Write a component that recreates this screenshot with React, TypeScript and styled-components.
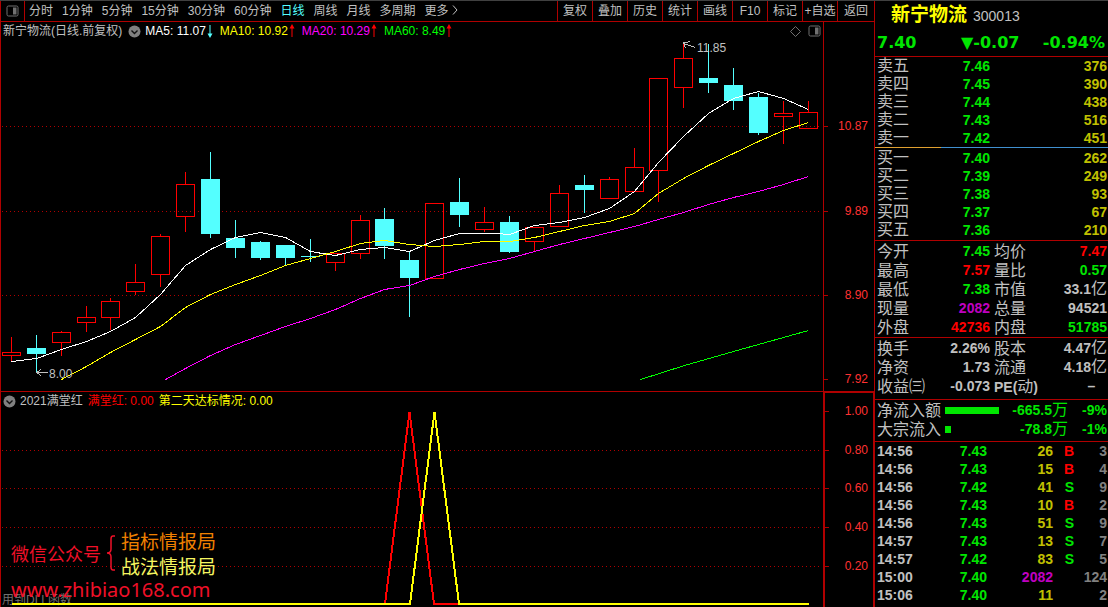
import React from "react";
import styled, { createGlobalStyle } from "styled-components";

const latin = '"Liberation Sans", "Noto Sans CJK SC", sans-serif';
const RED_LINE = "#b00000";

const colors = {
  text: "#c0c0c0",
  green: "#00e600",
  red: "#ff0000",
  yellow: "#c0c000",
  purple: "#c000c0",
  gray: "#808080",
  cyan: "#54ffff",
} as const;
type Tone = keyof typeof colors;

const GlobalStyle = createGlobalStyle`
  * { box-sizing: border-box; }
  body { margin: 0; background: #000; color: ${colors.text}; font-family: ${latin}; font-size: 12px; }
`;

const Page = styled.div`
  display: grid;
  grid-template-columns: minmax(0, 1fr) 234px;
  height: 100vh;
  min-height: 606px;
  border-top: 1px solid #404040;
  background: #000;
`;

const Workspace = styled.main`
  display: grid;
  grid-template-rows: 21px minmax(0, 370fr) minmax(0, 215fr);
  border-left: 1px solid ${RED_LINE};
  min-width: 0;
`;

/* ---------- toolbar ---------- */
const Toolbar = styled.nav`
  display: flex;
  justify-content: space-between;
  border-bottom: 1px solid ${RED_LINE};
  min-width: 0;
`;
const Periods = styled.div`
  display: flex;
  gap: 9px;
`;
const Actions = styled.div`
  display: flex;
`;
const BareButton = styled.button`
  border: 0;
  padding: 0;
  background: none;
  color: ${colors.text};
  font: 12px/20px ${latin};
  white-space: nowrap;
  cursor: pointer;
`;
const LayoutButton = styled(BareButton)`
  display: flex;
  align-items: center;
  width: 24px;
  padding-left: 5px;
  margin-right: -5px;
  border-right: 1px solid ${RED_LINE};
`;
const PeriodButton = styled(BareButton)<{ $active?: boolean }>`
  color: ${(p) => (p.$active ? colors.cyan : colors.text)};
`;
const ActionButton = styled(BareButton)`
  width: 35px;
  border-left: 1px solid ${RED_LINE};
  &:last-child { width: 37px; }
`;

/* ---------- charts ---------- */
const Pane = styled.section`
  display: grid;
  grid-template-columns: minmax(0, 1fr) 51px;
  grid-template-rows: minmax(0, 1fr);
  min-height: 0;
`;
const MainPane = styled(Pane)`
  border-bottom: 1px solid ${RED_LINE};
`;
const Plot = styled.div`
  position: relative;
  min-width: 0;
  overflow: hidden;
`;
const Drawing = styled.svg`
  display: block;
  position: relative;
  z-index: 1;
  width: 100%;
  height: 100%;
`;
const Legend = styled.header`
  position: absolute;
  z-index: 2;
  inset: 2px 2px auto 2px;
  display: flex;
  align-items: center;
  height: 14px;
  line-height: 14px;
  white-space: nowrap;
`;
const LegendTitle = styled.span`
  margin-right: 6px;
`;
const LegendItem = styled.span<{ $color: string }>`
  display: flex;
  align-items: center;
  gap: 1px;
  margin-right: 7px;
  color: ${(p) => p.$color};
`;
const FormulaItem = styled.span<{ $color: string }>`
  margin-left: 5px;
  color: ${(p) => p.$color};
`;
const ToggleButton = styled(BareButton)`
  display: flex;
  margin-right: 4px;
`;
const LegendTools = styled.span`
  display: flex;
  align-items: center;
  gap: 7px;
  margin-left: auto;
`;
const PriceNote = styled.span`
  position: absolute;
  z-index: 2;
  line-height: 14px;
`;
const Axis = styled.div<{ $rows: string; $boxed?: boolean }>`
  display: grid;
  grid-template-rows: ${(p) => p.$rows};
  border: 0 solid ${RED_LINE};
  border-width: ${(p) => (p.$boxed ? "1px 1px 0 2px" : "0 0 0 1px")};
  padding-right: ${(p) => (p.$boxed ? 5 : 6)}px;
  color: #ff3232;
`;
const AxisLabel = styled.span`
  position: relative;
  align-self: end;
  height: 14px;
  line-height: 14px;
  text-align: right;
  &::before {
    content: "";
    position: absolute;
    left: 0;
    top: 7px;
    width: 4px;
    height: 1px;
    background: ${RED_LINE};
  }
`;

/* ---------- watermark ---------- */
const Watermark = styled.div`
  position: absolute;
  z-index: 2;
  left: 10px;
  bottom: 5px;
`;
const WatermarkRow = styled.div`
  display: flex;
  align-items: center;
  gap: 5px;
  color: #f01028;
  font: 18px/24px "Noto Sans CJK SC", sans-serif;
`;
const WatermarkNames = styled.div`
  display: grid;
  font-size: 19px;
  line-height: 25px;
`;
const WatermarkName = styled.span<{ $color: string }>`
  color: ${(p) => p.$color};
`;
const Site = styled.div`
  color: #f01028;
  font: 20px/24px "Noto Sans", sans-serif;
`;
const DllNote = styled.span`
  position: absolute;
  z-index: 0;
  left: 1px;
  bottom: 0;
  color: #707070;
  line-height: 14px;
`;

/* ---------- quote panel ---------- */
const Sidebar = styled.aside`
  border-left: 1px solid ${RED_LINE};
  min-width: 0;
`;
const QuoteHead = styled.header`
  height: 55px;
  padding: 0 3px 0 2px;
`;
const NameLine = styled.div`
  display: flex;
  align-items: baseline;
  gap: 6px;
  padding-left: 14px;
  line-height: 24px;
`;
const StockName = styled.h1`
  margin: 0;
  color: #ffff00;
  font: bold 19px/24px "Noto Sans CJK SC", sans-serif;
`;
const StockCode = styled.span`
  font-size: 14px;
`;
const PriceLine = styled.div`
  display: grid;
  grid-template-columns: 84px 1fr auto;
  color: ${colors.green};
  font: bold 16px/30px "DejaVu Sans", sans-serif;
`;
const Block = styled.section<{ $top: number; $bottom: number }>`
  padding: ${(p) => p.$top}px 1px ${(p) => p.$bottom}px 2px;
  border-top: 1px solid ${RED_LINE};
`;
const SpreadBar = styled.div`
  height: 1px;
  margin: 0 -1px 1px -2px;
  background: linear-gradient(to right, #e0a030 66px, #4090d0 66px);
`;
const DataTable = styled.table`
  width: 100%;
  table-layout: fixed;
  border-collapse: collapse;
`;
const Row = styled.tr<{ $height: number }>`
  height: ${(p) => p.$height}px;
  line-height: ${(p) => p.$height}px;
`;
const Label = styled.th<{ $indent?: boolean }>`
  padding: 0 0 0 ${(p) => (p.$indent ? 4 : 0)}px;
  text-align: left;
  white-space: nowrap;
  font-size: 16px;
  font-weight: 400;
  line-height: inherit;
`;
const Value = styled.td<{ $tone?: Tone; $left?: boolean }>`
  padding: 0;
  color: ${(p) => colors[p.$tone ?? "text"]};
  text-align: ${(p) => (p.$left ? "left" : "right")};
  white-space: nowrap;
  font-size: 14px;
  font-weight: 700;
  line-height: inherit;
`;
const Unit = styled.span`
  font-size: 16px;
  font-weight: 400;
  line-height: 1;
`;
const Latin = styled.b`
  font-size: 14px;
  line-height: 1;
`;
const BarCell = styled.td`
  padding: 0;
`;
const Bar = styled.div`
  height: 7px;
  background: ${colors.green};
`;

/* ---------- data ---------- */
const periods = ["分时", "1分钟", "5分钟", "15分钟", "30分钟", "60分钟", "日线", "周线", "月线", "多周期"];
const actions = ["复权", "叠加", "历史", "统计", "画线", "F10", "标记", "+自选", "返回"];

const averages = [
  { text: "MA5: 11.07", color: "#ffffff", up: false },
  { text: "MA10: 10.92", color: "#ffff00", up: true },
  { text: "MA20: 10.29", color: "#ff00ff", up: true },
  { text: "MA60: 8.49", color: "#00ff00", up: true },
];

// centre x, high, body top, body bottom, low, rising
type Candle = [number, number, number, number, number, boolean];
const candles: Candle[] = [
  [11, 337, 352, 355, 361, true], [36, 335, 348, 354, 372, false],
  [61, 331, 332, 342, 356, true], [86, 306, 317, 322, 332, true],
  [110, 298, 301, 317, 330, true], [135, 264, 282, 291, 295, true],
  [160, 234, 236, 274, 287, true], [185, 172, 184, 216, 232, true],
  [210, 152, 179, 234, 238, false], [235, 220, 238, 248, 258, false],
  [260, 241, 242, 258, 260, false], [285, 245, 245, 258, 265, false],
  [310, 239, 256, 257, 262, false], [335, 253, 253, 262, 271, true],
  [360, 215, 220, 253, 259, true], [384, 208, 219, 246, 259, false],
  [409, 251, 260, 278, 317, false], [434, 203, 203, 278, 278, true],
  [459, 178, 202, 215, 227, false], [484, 207, 222, 229, 232, true],
  [509, 216, 222, 252, 253, false], [534, 227, 227, 241, 251, true],
  [559, 185, 193, 226, 226, true], [584, 175, 185, 190, 213, false],
  [609, 177, 179, 198, 198, true], [634, 148, 167, 191, 191, true],
  [658, 78, 78, 170, 202, true], [683, 43, 58, 87, 108, true],
  [708, 44, 78, 83, 93, false], [733, 68, 85, 101, 110, false],
  [758, 93, 97, 133, 135, false], [783, 101, 113, 116, 144, true],
  [808, 101, 112, 128, 128, true],
];

const maLines = [
  { color: "#ffffff", points: "11,361 36,358 61,349 86,341 110,331 135,317 160,294 185,265 210,249 235,237 260,232 285,237 310,251 322,253 335,255 360,249 384,247 409,251 434,240 459,233 496,233 509,234 534,225 559,222 584,217 609,208 634,191 658,162 683,136 708,113 733,98 758,91 783,98 808,109" },
  { color: "#ffff00", points: "61,379 86,366 110,352 135,339 160,326 185,307 210,294 235,284 260,275 285,265 310,258 335,251 360,243 384,240 409,244 434,246 459,244 484,241 509,241 534,237 559,231 584,225 609,221 634,213 658,193 683,178 708,165 733,153 758,141 783,130 808,122" },
  { color: "#ff00ff", points: "165,379 185,368 210,355 235,344 260,335 285,326 310,318 335,309 360,298 384,289 409,285 434,276 459,269 484,263 509,258 534,251 559,244 584,238 609,232 634,226 658,219 683,212 708,204 733,197 758,191 783,184 808,176" },
  { color: "#00ff00", points: "640,379 684,365 733,351 783,337 808,330" },
];

const sells = [["卖五", "7.46", 376], ["卖四", "7.45", 390], ["卖三", "7.44", 438], ["卖二", "7.43", 516], ["卖一", "7.42", 451]];
const buys = [["买一", "7.40", 262], ["买二", "7.39", 249], ["买三", "7.38", 93], ["买四", "7.37", 67], ["买五", "7.36", 210]];

type Info = [React.ReactNode, React.ReactNode, Tone, React.ReactNode, React.ReactNode, Tone];
const infoTop: Info[] = [
  ["今开", "7.45", "green", "均价", "7.47", "red"],
  ["最高", "7.57", "red", "量比", "0.57", "green"],
  ["最低", "7.38", "green", "市值", <>33.1<Unit>亿</Unit></>, "text"],
  ["现量", "2082", "purple", "总量", "94521", "text"],
  ["外盘", "42736", "red", "内盘", "51785", "green"],
];
const infoBottom: Info[] = [
  ["换手", "2.26%", "text", "股本", <>4.47<Unit>亿</Unit></>, "text"],
  ["净资", "1.73", "text", "流通", <>4.18<Unit>亿</Unit></>, "text"],
  ["收益㈢", "-0.073", "text", <><Latin>PE(</Latin>动<Latin>)</Latin></>, <>–&nbsp;&nbsp;&nbsp;</>, "text"],
];
const flows = [
  { label: "净流入额", bar: 54, value: "-665.5", percent: "-9%" },
  { label: "大宗流入", bar: 6, value: "-78.8", percent: "-1%" },
];
const deals: [string, string, number, string, number][] = [
  ["14:56", "7.43", 26, "B", 3],
  ["14:56", "7.43", 15, "B", 4],
  ["14:56", "7.42", 41, "S", 9],
  ["14:56", "7.43", 10, "B", 2],
  ["14:56", "7.43", 51, "S", 9],
  ["14:57", "7.43", 13, "S", 7],
  ["14:57", "7.42", 83, "S", 5],
  ["15:00", "7.40", 2082, "", 124],
  ["15:06", "7.40", 11, "", 2],
];

/* ---------- icons ---------- */
const PanelIcon = () => (
  <svg width="13" height="12" viewBox="0 0 13 12" aria-hidden="true">
    <rect x="1" y="1" width="11" height="10" rx="1.5" fill="none" stroke="#707070" />
    <rect x="7" y="2.5" width="3.5" height="7" fill="#707070" />
  </svg>
);
const DiamondIcon = () => (
  <svg width="11" height="11" viewBox="0 0 11 11" aria-hidden="true">
    <path d="M5.5 .5l5 5-5 5-5-5z" fill="none" stroke="#707070" />
  </svg>
);
const ChevronBadge = () => (
  <svg width="13" height="13" viewBox="0 0 13 13" aria-hidden="true">
    <circle cx="6.5" cy="6.5" r="6" fill="#808080" />
    <path d="M3.5 5.5l3 3 3-3" fill="none" stroke="#101010" strokeWidth="1.4" />
  </svg>
);
const Trend = ({ up }: { up: boolean }) => (
  <svg width="6" height="14" viewBox="0 0 6 14" aria-hidden="true">
    {up ? (
      <path d="M3 0L5.5 4.5H3.5V13H2.5V4.5H.5z" fill="#ff0000" />
    ) : (
      <path d="M3 14L5.5 9.5H3.5V1H2.5V9.5H.5z" fill={colors.cyan} />
    )}
  </svg>
);

const GridLine = ({ y }: { y: number }) => (
  <line x1="2" x2="821" y1={y + 0.5} y2={y + 0.5} stroke={RED_LINE} strokeDasharray="1 3" />
);

const CandleShape = ({ c: [x, high, top, bottom, low, up] }: { c: Candle }) =>
  up ? (
    <path
      d={`M${x - 8.5} ${top + 0.5}H${x + 9.5}V${bottom + 0.5}H${x - 8.5}ZM${x + 0.5} ${high}V${top}M${x + 0.5} ${bottom}V${low}`}
      fill="none"
      stroke="#ff0000"
    />
  ) : (
    <path d={`M${x - 9} ${top}H${x + 10}V${bottom}H${x - 9}ZM${x} ${high}H${x + 1}V${low}H${x}Z`} fill={colors.cyan} fillRule="nonzero" />
  );

const noteAt = (x: number, y: number) => ({
  left: `${((x - 1) / 822) * 100}%`,
  top: `${((y - 22) / 369) * 100}%`,
});

const PriceChart = () => (
  <MainPane aria-label="日线">
    <Plot>
      <Legend>
        <LegendTitle>新宁物流(日线.前复权)</LegendTitle>
        <ToggleButton aria-label="展开"><ChevronBadge /></ToggleButton>
        {averages.map((a) => (
          <LegendItem key={a.text} $color={a.color}>
            {a.text}
            <Trend up={a.up} />
          </LegendItem>
        ))}
        <LegendTools>
          <DiamondIcon />
          <PanelIcon />
        </LegendTools>
      </Legend>
      <Drawing viewBox="1 22 822 369" preserveAspectRatio="none" shapeRendering="crispEdges">
        {[126, 211, 295].map((y) => <GridLine key={y} y={y} />)}
        {candles.map((c) => <CandleShape key={c[0]} c={c} />)}
        {maLines.map((l) => (
          <polyline key={l.color} points={l.points} transform="translate(.5 .5)" fill="none" stroke={l.color} />
        ))}
        <path d="M48 372.5H37M41 369l-4 3.5 4 3.5M695 47.5L684 43.5M690 41.5l-6.500 1.500 2 5" fill="none" stroke="#c0c0c0" />
      </Drawing>
      <PriceNote style={noteAt(49, 367)}>8.00</PriceNote>
      <PriceNote style={noteAt(697, 41)}>11.85</PriceNote>
    </Plot>
    <Axis $rows="111fr 85fr 84fr 84fr 5fr">
      {["10.87", "9.89", "8.90", "7.92"].map((v) => <AxisLabel key={v}>{v}</AxisLabel>)}
    </Axis>
  </MainPane>
);

const IndicatorChart = () => (
  <Pane aria-label="2021满堂红">
    <Plot>
      <Legend>
        <ToggleButton aria-label="展开"><ChevronBadge /></ToggleButton>
        <span>2021满堂红</span>
        <FormulaItem $color="#ff0000">满堂红: 0.00</FormulaItem>
        <FormulaItem $color="#ffff00">第二天达标情况: 0.00</FormulaItem>
      </Legend>
      <DllNote>用到DLL函数</DllNote>
      <Drawing viewBox="1 392 822 215" preserveAspectRatio="none" shapeRendering="crispEdges">
        {[450, 488, 527, 566].map((y) => <GridLine key={y} y={y} />)}
        <polyline points="12,604 385,604 409.500,412 434,604 459,604" fill="none" stroke="#ff0000" strokeWidth="2" />
        <polyline points="12,604 410,604 434.500,412 459,604 809,604" fill="none" stroke="#ffff00" strokeWidth="2" />
      </Drawing>
      <Watermark>
        <WatermarkRow>
          <span>微信公众号</span>
          <svg width="10" height="36" viewBox="0 0 10 36" aria-hidden="true">
            <path d="M9 1H7Q5 1 5 4V14Q5 18 1 18Q5 18 5 22V32Q5 35 7 35H9" fill="none" stroke="#f01028" strokeWidth="1.5" />
          </svg>
          <WatermarkNames>
            <WatermarkName $color="#f08000">指标情报局</WatermarkName>
            <WatermarkName $color="#f5f560">战法情报局</WatermarkName>
          </WatermarkNames>
        </WatermarkRow>
        <Site>www.zhibiao168.com</Site>
      </Watermark>
    </Plot>
    <Axis $boxed $rows="25fr 39fr 38fr 39fr 39fr 34fr">
      {["1.00", "0.80", "0.60", "0.40", "0.20"].map((v) => <AxisLabel key={v}>{v}</AxisLabel>)}
    </Axis>
  </Pane>
);

const Columns = ({ widths }: { widths: number[] }) => (
  <colgroup>
    {widths.map((w, i) => <col key={i} width={w} />)}
    <col />
  </colgroup>
);

const Orders = ({ rows }: { rows: (string | number)[][] }) => (
  <DataTable>
    <Columns widths={[50, 63]} />
    <tbody>
      {rows.map(([label, price, volume]) => (
        <Row key={label} $height={18}>
          <Label scope="row">{label}</Label>
          <Value $tone="green">{price}</Value>
          <Value $tone="yellow">{volume}</Value>
        </Row>
      ))}
    </tbody>
  </DataTable>
);

const InfoTable = ({ rows }: { rows: Info[] }) => (
  <DataTable>
    <Columns widths={[50, 63, 50]} />
    <tbody>
      {rows.map(([l1, v1, t1, l2, v2, t2], i) => (
        <Row key={i} $height={19}>
          <Label scope="row">{l1}</Label>
          <Value $tone={t1}>{v1}</Value>
          <Label scope="row" $indent>{l2}</Label>
          <Value $tone={t2}>{v2}</Value>
        </Row>
      ))}
    </tbody>
  </DataTable>
);

export default function App() {
  return (
    <>
      <GlobalStyle />
      <Page>
        <Workspace>
          <Toolbar>
            <Periods>
              <LayoutButton aria-label="布局"><PanelIcon /></LayoutButton>
              {periods.map((p) => (
                <PeriodButton key={p} $active={p === "日线"}>{p}</PeriodButton>
              ))}
              <PeriodButton>
                更多{" "}
                <svg width="6" height="10" viewBox="0 0 6 10" aria-hidden="true">
                  <path d="M1 .5L5 5 1 9.500" fill="none" stroke="#c0c0c0" />
                </svg>
              </PeriodButton>
            </Periods>
            <Actions>
              {actions.map((a) => <ActionButton key={a}>{a}</ActionButton>)}
            </Actions>
          </Toolbar>
          <PriceChart />
          <IndicatorChart />
        </Workspace>

        <Sidebar>
          <QuoteHead>
            <NameLine>
              <StockName>新宁物流</StockName>
              <StockCode>300013</StockCode>
            </NameLine>
            <PriceLine>
              <span>7.40</span>
              <span>▼-0.07</span>
              <span>-0.94%</span>
            </PriceLine>
          </QuoteHead>
          <Block $top={0} $bottom={1}>
            <Orders rows={sells} />
            <SpreadBar />
            <Orders rows={buys} />
          </Block>
          <Block $top={1} $bottom={0}>
            <InfoTable rows={infoTop} />
          </Block>
          <Block $top={1} $bottom={3}>
            <InfoTable rows={infoBottom} />
          </Block>
          <Block $top={1} $bottom={2}>
            <DataTable>
              <Columns widths={[68, 54, 69]} />
              <tbody>
                {flows.map((f) => (
                  <Row key={f.label} $height={19}>
                    <Label scope="row">{f.label}</Label>
                    <BarCell><Bar style={{ width: f.bar }} /></BarCell>
                    <Value $tone="green">{f.value}<Unit>万</Unit></Value>
                    <Value $tone="green">{f.percent}</Value>
                  </Row>
                ))}
              </tbody>
            </DataTable>
          </Block>
          <Block $top={0} $bottom={0}>
            <DataTable>
              <Columns widths={[50, 60, 66, 21]} />
              <tbody>
                {deals.map(([time, price, volume, side, count], i) => (
                  <Row key={i} $height={18}>
                    <Value $left>{time}</Value>
                    <Value $tone="green">{price}</Value>
                    <Value $tone={volume > 1000 ? "purple" : "yellow"}>{volume}</Value>
                    <Value $tone={side === "B" ? "red" : "green"}>{side}</Value>
                    <Value $tone="gray">{count}</Value>
                  </Row>
                ))}
              </tbody>
            </DataTable>
          </Block>
        </Sidebar>
      </Page>
    </>
  );
}
